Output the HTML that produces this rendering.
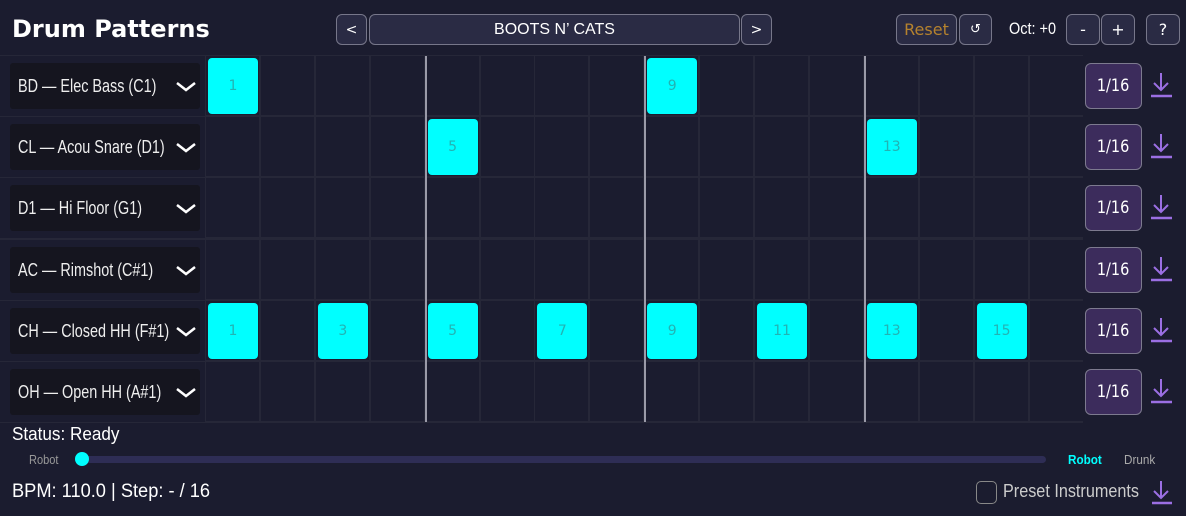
<!DOCTYPE html>
<html><head><style>
*{box-sizing:border-box;margin:0;padding:0}
body{width:1186px;height:516px;background:#1b1c2f;color:#fff;font-family:"Liberation Sans",sans-serif;position:relative;overflow:hidden}
.a{position:absolute;white-space:nowrap}
.n{display:inline-block;transform-origin:left center}
.btn{position:absolute;border:1px solid #77778a;border-radius:6px;background:#2a2b44;color:#fff;display:flex;align-items:center;justify-content:center;font-size:16px;font-family:"DejaVu Sans","Liberation Sans",sans-serif}
.lbl{position:absolute;left:10px;width:190px;height:46px;background:#15151f;border-radius:3px;font-size:18px;color:#eee;white-space:nowrap}
.lbl .n{position:absolute;left:8px;top:13px;transform:scaleX(.8)}
.lbl svg{position:absolute;left:165px;top:18px}
.cell{position:absolute;width:53px;height:59px;background:#1b1c2f}
.on{position:absolute;width:50px;height:56px;background:#00ffff;border-radius:4px;color:#22b3b3;font-size:14px;font-family:"DejaVu Sans",sans-serif;display:flex;align-items:center;justify-content:center}
.q{position:absolute;left:1085px;width:57px;height:46px;background:#3c2c5c;border:1px solid #7d7a8f;border-radius:6px;font-size:17px;display:flex;align-items:center;justify-content:center;font-family:"DejaVu Sans",sans-serif}
.q span{display:inline-block;transform:scaleX(.85)}
.dl{position:absolute;left:1150px}
.vl{position:absolute;top:56px;width:2px;height:366px;background:#9a9aa8}
</style></head><body>
<div class="a" style="left:12px;top:15px;font:bold 24px 'DejaVu Sans',sans-serif">Drum Patterns</div>
<div class="btn" style="left:336px;top:14px;width:31px;height:31px;font-size:14px">&lt;</div>
<div class="btn" style="left:369px;top:14px;width:371px;height:31px;font-size:16px;font-family:'Liberation Sans',sans-serif">BOOTS N’ CATS</div>
<div class="btn" style="left:741px;top:14px;width:31px;height:31px;font-size:14px">&gt;</div>
<div class="btn" style="left:896px;top:14px;width:61px;height:31px;color:#b5822e">Reset</div>
<div class="btn" style="left:959px;top:14px;width:33px;height:31px;font-size:13px">↺</div>
<div class="a" style="left:1009px;top:19px;font-size:17px"><span class="n" style="transform:scaleX(.85)">Oct: +0</span></div>
<div class="btn" style="left:1066px;top:14px;width:34px;height:31px">-</div>
<div class="btn" style="left:1101px;top:14px;width:34px;height:31px">+</div>
<div class="btn" style="left:1146px;top:14px;width:34px;height:31px">?</div>
<div class="a" style="left:0;top:55px;width:1083px;height:368px;background:#262738"></div>
<div id="g"></div>
<div class="a" style="left:12px;top:424px;font-size:18px"><span class="n" style="transform:scaleX(.95)">Status: Ready</span></div>
<div class="a" style="left:29px;top:452px;font-size:13px;color:#999"><span class="n" style="transform:scaleX(.85)">Robot</span></div>
<div class="a" style="left:80px;top:456px;width:966px;height:7px;background:#2e2d55;border-radius:4px"></div>
<div class="a" style="left:75px;top:452px;width:14px;height:14px;background:#00ffff;border-radius:50%"></div>
<div class="a" style="left:1068px;top:452px;font-size:13px;color:#00ffff;font-weight:bold"><span class="n" style="transform:scaleX(.9)">Robot</span></div>
<div class="a" style="left:1124px;top:452px;font-size:13px;color:#aaa"><span class="n" style="transform:scaleX(.9)">Drunk</span></div>
<div class="a" style="left:12px;top:481px;font-size:19px"><span class="n" style="transform:scaleX(.96)">BPM: 110.0 | Step: - / 16</span></div>
<div class="a" style="left:976px;top:481px;width:21px;height:23px;border:1px solid #888;border-radius:5px"></div>
<div class="a" style="left:1003px;top:481px;font-size:18px;color:#ccc"><span class="n" style="transform:scaleX(.9)">Preset Instruments</span></div>
<svg class="a" style="left:1150px;top:478px" width="24" height="28" viewBox="0 0 24 28"><path d="M11 3V20M4 13l7 7 7-7" stroke="#9b6fe3" stroke-width="2" fill="none"/><path d="M2 25h20" stroke="#9b6fe3" stroke-width="2.5"/></svg>
<script>
var rows=[["BD — Elec Bass (C1)",[1,9]],["CL — Acou Snare (D1)",[5,13]],["D1 — Hi Floor (G1)",[]],["AC — Rimshot (C#1)",[]],["CH — Closed HH (F#1)",[1,3,5,7,9,11,13,15]],["OH — Open HH (A#1)",[]]];
var h="";
rows.forEach(function(r,i){
 var y=56+i*61.2;
 h+='<div class="a" style="left:0;top:'+y+'px;width:205px;height:60px;background:#1b1c2f"></div>';
 h+='<div class="lbl" style="top:'+(y+7)+'px"><span class="n">'+r[0]+'</span><svg width="22" height="12" viewBox="0 0 22 12"><path d="M2 2l9 7 9-7" stroke="#fff" stroke-width="2.5" fill="none"/></svg></div>';
 for(var c=0;c<16;c++){var x=206+c*54.9;h+='<div class="cell" style="left:'+x+'px;top:'+y+'px"></div>';}
 r[1].forEach(function(n){var x=208+(n-1)*54.9;h+='<div class="on" style="left:'+x+'px;top:'+(y+2)+'px">'+n+'</div>';});
 h+='<div class="q" style="top:'+(y+7)+'px"><span>1/16</span></div>';
 h+='<svg class="dl" style="top:'+(y+15)+'px" width="24" height="28" viewBox="0 0 24 28"><path d="M11 2V19M4 12l7 7 7-7" stroke="#9b6fe3" stroke-width="2" fill="none"/><path d="M1 25h21" stroke="#9b6fe3" stroke-width="2.5"/></svg>';
});
[425,644,864].forEach(function(x){h+='<div class="vl" style="left:'+x+'px"></div>';});
document.getElementById("g").innerHTML=h;
</script>
</body></html>
